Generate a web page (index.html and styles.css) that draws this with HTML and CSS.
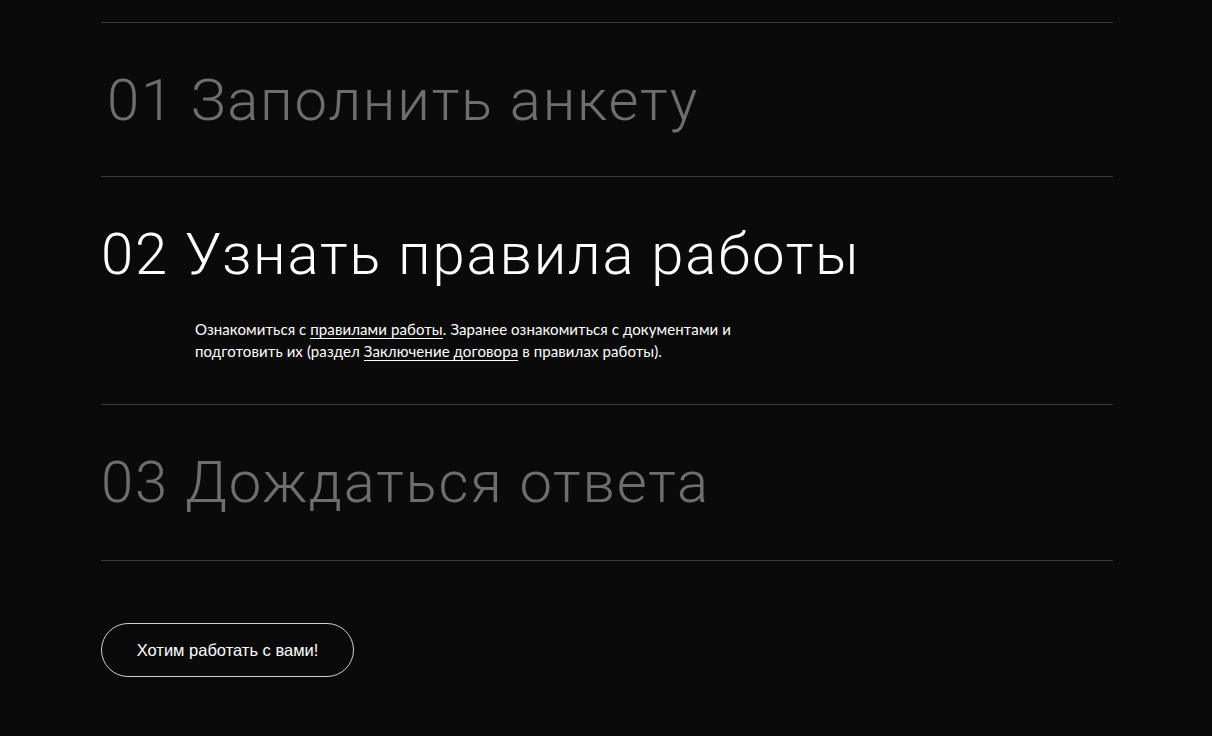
FILE: index.html
```html
<!DOCTYPE html>
<html lang="ru">
<head>
<meta charset="utf-8">
<link rel="stylesheet" href="styles.css">
</head>
<body>
<main class="wrap">
  <ul class="steps">
    <li class="step step--first">
      <h2 class="step-title step-title--first">01 Заполнить анкету</h2>
    </li>
    <li class="step step--active">
      <h2 class="step-title">02 Узнать правила работы</h2>
      <p class="step-text">Ознакомиться с <a href="#">правилами работы</a>. Заранее ознакомиться с документами и<br>подготовить их (раздел <a href="#">Заключение договора</a> в правилах работы).</p>
    </li>
    <li class="step">
      <h2 class="step-title">03 Дождаться ответа</h2>
    </li>
  </ul>
  <a class="btn" href="#">Хотим работать с вами!</a>
</main>
</body>
</html>
```
FILE: styles.css
```css
html, body {
  margin: 0;
  padding: 0;
  background: #0a0a0a;
}
body {
  font-family: Roboto, "Liberation Sans", sans-serif;
  color: #fff;
}
.wrap {
  width: 1012px;
  margin-left: 101px;
  padding-top: 22px;
}
.steps {
  list-style: none;
  margin: 0;
  padding: 0;
}
.step {
  border-top: 1px solid #3a3a3a;
  padding: 42px 0;
}
.step--first {
  padding-bottom: 41px;
}
.step:last-child {
  border-bottom: 1px solid #3a3a3a;
  padding-bottom: 43px;
}
.step-title {
  margin: 0;
  font-weight: 300;
  font-size: 58px;
  line-height: 70px;
  color: #6e6e6e;
  letter-spacing: 1.8px;
}
.step-title--first {
  padding-left: 6px;
}
.step--active .step-title {
  color: #fff;
}
.step-text {
  margin: 29px 0 0 94px;
  font-family: Lato, sans-serif;
  font-size: 15px;
  line-height: 22px;
  letter-spacing: 0.1px;
  color: #fff;
}
.step-text a {
  color: #fff;
  text-decoration: none;
  border-bottom: 1px solid #fff;
}
.btn {
  display: inline-flex;
  align-items: center;
  justify-content: center;
  margin-top: 62px;
  width: 251px;
  height: 52px;
  border: 1px solid #d0d0d0;
  border-radius: 27px;
  color: #fff;
  text-decoration: none;
  font-family: "Liberation Sans", sans-serif;
  font-size: 16.5px;
}
```
